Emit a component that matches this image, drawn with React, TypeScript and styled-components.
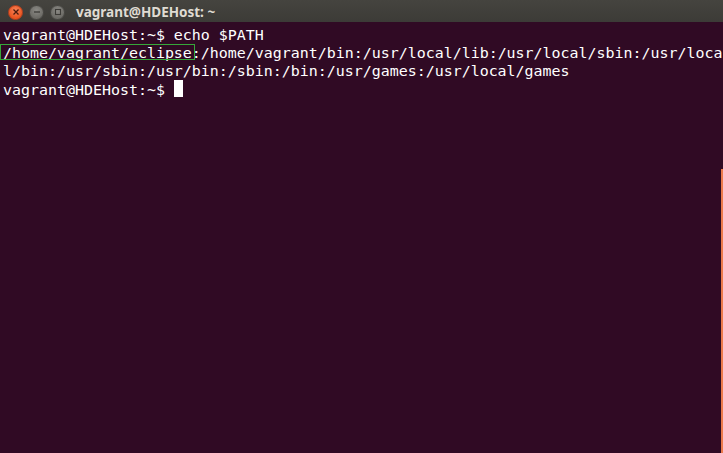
import React from "react";
import styled, { createGlobalStyle } from "styled-components";

const Global = createGlobalStyle`
  html, body { margin: 0; padding: 0; background: #300a24; }
  body { width: 723px; height: 453px; overflow: hidden; }
  #root { width: 723px; height: 453px; }
`;

const Window = styled.div`
  display: flex;
  flex-direction: column;
  width: 723px;
  height: 453px;
  background: #300a24;
`;

const TitleBar = styled.div`
  display: flex;
  align-items: center;
  height: 22px;
  padding-left: 8px;
  background: linear-gradient(#45443f, #3c3b37);
  flex: none;
`;

const Buttons = styled.div`
  display: flex;
  align-items: center;
  gap: 6px;
  margin-right: 11px;
  margin-top: 2px;
`;

const CircleBtn = styled.div<{ $close?: boolean }>`
  width: 15px;
  height: 15px;
  border-radius: 50%;
  display: flex;
  align-items: center;
  justify-content: center;
  box-sizing: border-box;
  border: 1px solid ${(p) => (p.$close ? "#b8401e" : "#4a4945")};
  background: ${(p) =>
    p.$close
      ? "radial-gradient(circle at 50% 35%, #f7845a, #e9541f 70%)"
      : "radial-gradient(circle at 50% 35%, #8b8a85, #6b6a65 70%)"};
`;

const Title = styled.div`
  font-family: "Noto Sans", "DejaVu Sans", sans-serif;
  font-weight: 700;
  font-size: 13.5px;
  color: #dfdbd2;
  margin-top: 1px;
`;

const Terminal = styled.div`
  position: relative;
  flex: 1;
  padding-left: 3px;
  padding-top: 4px;
  font-family: "DejaVu Sans Mono", monospace;
  font-size: 14.95px;
  color: #ffffff;
  white-space: pre;
`;

const Line = styled.div`
  height: 18px;
  line-height: 18px;
`;

const Marked = styled.span`
  position: relative;
  &::after {
    content: "";
    position: absolute;
    left: -3px;
    right: -3px;
    top: 0px;
    height: 16px;
    box-sizing: border-box;
    border: 1px solid #36a83a;
  }
`;

const Cursor = styled.span`
  display: inline-block;
  width: 9px;
  height: 17px;
  background: #ffffff;
  vertical-align: -2px;
`;

const ScrollMark = styled.div`
  position: absolute;
  right: 0;
  top: 147px;
  bottom: 0;
  width: 2px;
  background: #ec7a4c;
`;

export default function App() {
  return (
    <>
      <Global />
      <Window>
        <TitleBar>
          <Buttons>
            <CircleBtn $close>
              <svg width="8" height="8" viewBox="0 0 8 8">
                <path d="M1.5 1.5 L6.5 6.5 M6.5 1.5 L1.5 6.5" stroke="#4a1a0c" strokeWidth="1.3" />
              </svg>
            </CircleBtn>
            <CircleBtn>
              <svg width="8" height="8" viewBox="0 0 8 8">
                <path d="M1 4 H7" stroke="#3c3b37" strokeWidth="1.3" />
              </svg>
            </CircleBtn>
            <CircleBtn>
              <svg width="8" height="8" viewBox="0 0 8 8">
                <rect x="1.5" y="1.5" width="5" height="5" fill="none" stroke="#3c3b37" strokeWidth="1.1" />
              </svg>
            </CircleBtn>
          </Buttons>
          <Title>vagrant@HDEHost: ~</Title>
        </TitleBar>
        <Terminal>
          <Line>vagrant@HDEHost:~$ echo $PATH</Line>
          <Line>
            <Marked>/home/vagrant/eclipse</Marked>:/home/vagrant/bin:/usr/local/lib:/usr/local/sbin:/usr/loca
          </Line>
          <Line>l/bin:/usr/sbin:/usr/bin:/sbin:/bin:/usr/games:/usr/local/games</Line>
          <Line>
            vagrant@HDEHost:~$ <Cursor />
          </Line>
          <ScrollMark />
        </Terminal>
      </Window>
    </>
  );
}
